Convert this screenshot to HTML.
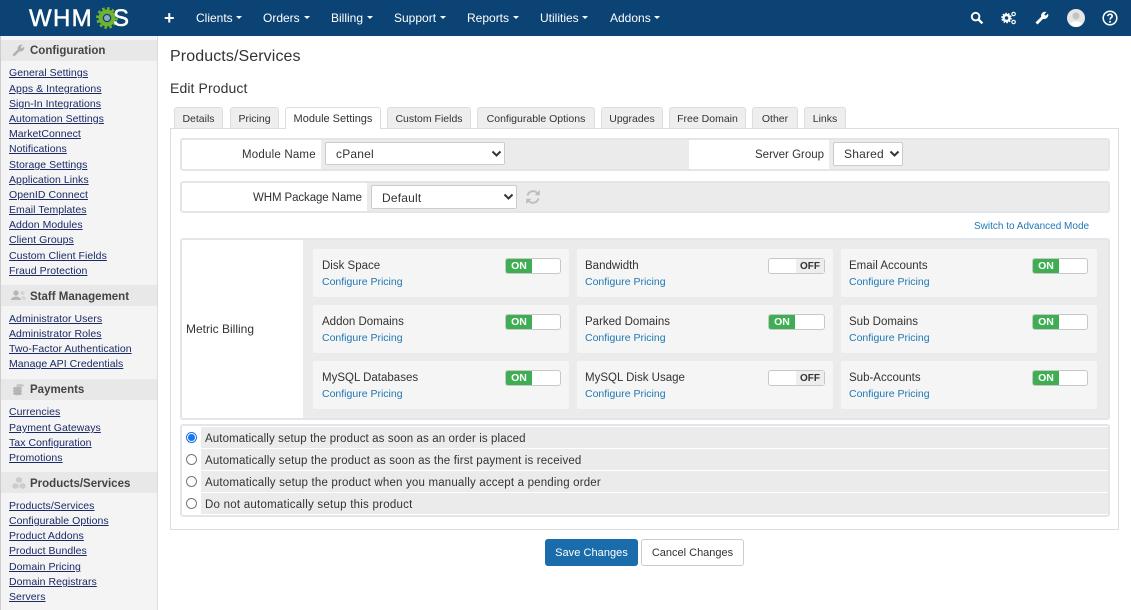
<!DOCTYPE html>
<html><head><meta charset="utf-8"><style>
html,body{margin:0;padding:0}
body{width:1131px;height:610px;overflow:hidden;position:relative;background:#fff;font-family:"Liberation Sans",sans-serif;font-size:11.5px;color:#333}
.a,.t,a,svg{position:absolute}
.t,a{white-space:nowrap;line-height:16px}
a{color:#1a2a66;text-decoration:underline;left:9px;font-size:10.5px;letter-spacing:.05px}
.n{color:#fff;font-size:12px;top:10px}
.c{position:absolute;top:16px;width:0;height:0;border:3.5px solid transparent;border-top-color:#fff;border-bottom:0}
.h{position:absolute;left:1px;width:156px;height:21px;background:#e8e8e8}
.ht{left:30px;font-weight:bold;font-size:11.5px;color:#444}
.tab{position:absolute;top:107px;height:20px;background:#eee;border:1px solid #ddd;border-bottom:0;border-radius:3px 3px 0 0;text-align:center;line-height:23px;font-size:10.5px;box-sizing:content-box}
.fs{position:absolute;left:180px;width:926px;border:2px solid #e2e6ea;border-radius:3px}
.g{position:absolute;background:#ebebeb}
.sel{position:absolute;background:#fff;border:1px solid #ccc;border-radius:2px;box-sizing:border-box;font-size:12px;line-height:22px;letter-spacing:.2px}
.card{position:absolute;width:256px;height:48px;background:#f5f5f5;border-radius:2px}
.ct{left:9px;top:9px;font-size:11.5px}
.cl{left:9px;top:25px;font-size:10.5px;color:#1f78b4;position:absolute;text-decoration:none;line-height:16px}
.sw{position:absolute;top:9px;left:192px;width:56px;height:16px;box-sizing:border-box;border:1px solid #c8c8c8;border-radius:3px;background:#fff}
.on{position:absolute;left:0;top:0;width:26px;height:14px;background:#3fae53;color:#fff;font-size:10.5px;font-weight:bold;line-height:14px;text-align:center;border-radius:2px 0 0 2px}
.off{position:absolute;right:0;top:0;width:28px;height:14px;background:#eee;color:#333;font-size:10px;font-weight:bold;line-height:15px;text-align:center}
.r{position:absolute;left:186px;width:9px;height:9px;border:1px solid #777;border-radius:50%;background:#fff}
.rt{left:205px;font-size:11.5px}
</style></head><body>
<div class="a" style="left:0;top:0;width:1131px;height:36px;background:#0b4474"></div>
<div class="t" style="left:29px;top:6px;font-size:24px;line-height:26px;color:#fff;letter-spacing:1.3px;-webkit-text-stroke:.5px #fff">WHM</div>
<svg style="left:95px;top:6px" width="24" height="24" viewBox="0 0 24 24"><circle cx="12" cy="12" r="9.6" fill="none" stroke="#6fb32f" stroke-width="2.6" stroke-dasharray="2.6 2.4"/><circle cx="12" cy="12" r="6.4" fill="none" stroke="#6fb32f" stroke-width="4.2"/><circle cx="12" cy="12" r="3" fill="#8fa8bd"/></svg>
<div class="t" style="left:113px;top:6px;font-size:24px;line-height:26px;color:#fff;-webkit-text-stroke:.5px #fff">S</div>
<div class="t" style="left:164px;top:8px;color:#fff;font-size:18px;line-height:20px;font-weight:bold">+</div>
<div class="t n" style="left:196px">Clients</div><i class="c" style="left:236px"></i>
<div class="t n" style="left:263px">Orders</div><i class="c" style="left:304px"></i>
<div class="t n" style="left:331px">Billing</div><i class="c" style="left:367px"></i>
<div class="t n" style="left:394px">Support</div><i class="c" style="left:440px"></i>
<div class="t n" style="left:467px">Reports</div><i class="c" style="left:513px"></i>
<div class="t n" style="left:540px">Utilities</div><i class="c" style="left:582px"></i>
<div class="t n" style="left:610px">Addons</div><i class="c" style="left:654px"></i>
<svg style="left:970px;top:11px" width="14" height="14" viewBox="0 0 14 14"><circle cx="5.6" cy="5.6" r="3.8" fill="none" stroke="#fff" stroke-width="1.9"/><path d="M8.5 8.5L12.4 12.4" stroke="#fff" stroke-width="2.3"/></svg>
<svg style="left:1001px;top:11px" width="16" height="14" viewBox="0 0 16 14"><circle cx="5.5" cy="7" r="3" fill="none" stroke="#fff" stroke-width="2.4"/><circle cx="5.5" cy="7" r="4.6" fill="none" stroke="#fff" stroke-width="1.4" stroke-dasharray="1.6 1.3"/><circle cx="12.6" cy="3" r="1.7" fill="none" stroke="#fff" stroke-width="1.2"/><circle cx="12.6" cy="11" r="1.7" fill="none" stroke="#fff" stroke-width="1.2"/></svg>
<svg style="left:1035px;top:11px" width="14" height="14" viewBox="0 0 14 14"><path d="M1.5 12.5L7.5 6.5" stroke="#fff" stroke-width="2.8"/><path d="M6.3 6A4 4 0 0 1 11.5 1L9.2 3.2 10.8 4.8 13 2.6A4 4 0 0 1 8 7.8Z" fill="#fff"/></svg>
<svg style="left:1067px;top:9px" width="18" height="18" viewBox="0 0 18 18"><circle cx="9" cy="9" r="9" fill="#e6e6e6"/><circle cx="9" cy="7" r="3.6" fill="#c4c4c4"/><path d="M2.6 15.4C4 11.4 14 11.4 15.4 15.4A9 9 0 0 1 2.6 15.4Z" fill="#fff"/></svg>
<svg style="left:1102px;top:10px" width="16" height="16" viewBox="0 0 16 16"><circle cx="8" cy="8" r="6.8" fill="none" stroke="#fff" stroke-width="1.5"/><path d="M5.8 6.2C5.9 3.6 10.2 3.6 10.2 6.1 10.2 7.7 8 7.7 8 9.6" fill="none" stroke="#fff" stroke-width="1.6"/><circle cx="8" cy="11.7" r="1" fill="#fff"/></svg>

<div class="a" style="left:0;top:36px;width:157px;height:574px;background:#f4f4f4;border-right:1px solid #ddd"></div>
<div class="a" style="left:0;top:36px;width:1px;height:574px;background:#ccc"></div>

<div class="h" style="top:40px"></div>
<svg style="left:12px;top:44px" width="13" height="13" viewBox="0 0 14 14"><path d="M1.5 12.5L7.5 6.5" stroke="#b0b0b0" stroke-width="2.8"/><path d="M6.3 6A4 4 0 0 1 11.5 1L9.2 3.2 10.8 4.8 13 2.6A4 4 0 0 1 8 7.8Z" fill="#b0b0b0"/></svg>
<div class="t ht" style="top:43px">Configuration</div>
<a style="top:65px">General Settings</a><a style="top:81px">Apps &amp; Integrations</a><a style="top:96px">Sign-In Integrations</a><a style="top:111px">Automation Settings</a><a style="top:126px">MarketConnect</a><a style="top:141px">Notifications</a><a style="top:157px">Storage Settings</a><a style="top:172px">Application Links</a><a style="top:187px">OpenID Connect</a><a style="top:202px">Email Templates</a><a style="top:217px">Addon Modules</a><a style="top:232px">Client Groups</a><a style="top:248px">Custom Client Fields</a><a style="top:263px">Fraud Protection</a>

<div class="h" style="top:285px"></div>
<svg style="left:11px;top:290px" width="15" height="11" viewBox="0 0 15 11"><circle cx="5" cy="3" r="2.6" fill="#b5b5b5"/><path d="M0 10C0 5.5 10 5.5 10 10Z" fill="#b5b5b5"/><circle cx="11.5" cy="3" r="2" fill="#d4d4d4"/><path d="M10.5 6.4C12.5 5.8 15 7 15 9.5H11Z" fill="#d4d4d4"/></svg>
<div class="t ht" style="top:289px">Staff Management</div>
<a style="top:311px">Administrator Users</a><a style="top:326px">Administrator Roles</a><a style="top:341px">Two-Factor Authentication</a><a style="top:356px">Manage API Credentials</a>

<div class="h" style="top:379px"></div>
<svg style="left:12px;top:383px" width="13" height="13" viewBox="0 0 13 13"><ellipse cx="8" cy="2.5" rx="4" ry="1.6" fill="#c8c8c8"/><ellipse cx="5.5" cy="5.5" rx="4.6" ry="1.7" fill="#b5b5b5"/><ellipse cx="5.5" cy="8" rx="4.6" ry="1.7" fill="#b5b5b5"/><ellipse cx="5.5" cy="10.5" rx="4.6" ry="1.7" fill="#b5b5b5"/></svg>
<div class="t ht" style="top:382px">Payments</div>
<a style="top:404px">Currencies</a><a style="top:420px">Payment Gateways</a><a style="top:435px">Tax Configuration</a><a style="top:450px">Promotions</a>

<div class="h" style="top:472px"></div>
<svg style="left:12px;top:477px" width="14" height="12" viewBox="0 0 14 12"><path d="M7 0L10 1.5V4.5L7 6 4 4.5V1.5Z" fill="#ccc"/><path d="M3.5 6L6.5 7.5V10.5L3.5 12 .5 10.5V7.5Z" fill="#ccc"/><path d="M10.5 6L13.5 7.5V10.5L10.5 12 7.5 10.5V7.5Z" fill="#ccc"/></svg>
<div class="t ht" style="top:476px">Products/Services</div>
<a style="top:498px">Products/Services</a><a style="top:513px">Configurable Options</a><a style="top:528px">Product Addons</a><a style="top:543px">Product Bundles</a><a style="top:559px">Domain Pricing</a><a style="top:574px">Domain Registrars</a><a style="top:589px">Servers</a>

<div class="t" style="left:170px;top:47px;font-size:16px;line-height:20px;letter-spacing:.1px">Products/Services</div>
<div class="t" style="left:170px;top:79px;font-size:14px;line-height:18px;letter-spacing:.1px">Edit Product</div>

<div class="a" style="left:170px;top:128px;width:947px;height:400px;border:1px solid #ddd"></div>
<div class="tab" style="left:174px;width:47px">Details</div>
<div class="tab" style="left:230px;width:47px">Pricing</div>
<div class="tab" style="left:285px;width:94px;height:21px;background:#fff;z-index:2;font-size:11px">Module Settings</div>
<div class="tab" style="left:387px;width:82px">Custom Fields</div>
<div class="tab" style="left:477px;width:116px">Configurable Options</div>
<div class="tab" style="left:601px;width:60px">Upgrades</div>
<div class="tab" style="left:669px;width:75px">Free Domain</div>
<div class="tab" style="left:752px;width:44px">Other</div>
<div class="tab" style="left:804px;width:40px">Links</div>

<div class="fs" style="top:138px;height:29px"></div>
<div class="g" style="left:321px;top:140px;width:368px;height:29px"></div>
<div class="g" style="left:829px;top:140px;width:279px;height:29px"></div>
<div class="t" style="left:242px;top:147px;font-size:11.5px;letter-spacing:.2px">Module Name</div>
<div class="sel" style="left:325px;top:142px;width:180px;height:23px;padding-left:10px">cPanel</div>
<svg style="left:491px;top:150px" width="11" height="8" viewBox="0 0 11 8"><path d="M1.5 1.5L5.5 5.5 9.5 1.5" fill="none" stroke="#333" stroke-width="2"/></svg>
<div class="t" style="left:755px;top:147px;font-size:11.5px">Server Group</div>
<div class="sel" style="left:833px;top:142px;width:70px;height:24px;padding-left:10px">Shared</div>
<svg style="left:889px;top:150px" width="11" height="8" viewBox="0 0 11 8"><path d="M1.5 1.5L5.5 5.5 9.5 1.5" fill="none" stroke="#333" stroke-width="2"/></svg>

<div class="fs" style="top:181px;height:28px"></div>
<div class="g" style="left:367px;top:183px;width:741px;height:28px"></div>
<div class="t" style="left:253px;top:190px;font-size:11.5px;letter-spacing:-.1px">WHM Package Name</div>
<div class="sel" style="left:371px;top:185px;width:146px;height:24px;padding-left:10px;line-height:24px">Default</div>
<svg style="left:503px;top:193px" width="11" height="8" viewBox="0 0 11 8"><path d="M1.5 1.5L5.5 5.5 9.5 1.5" fill="none" stroke="#333" stroke-width="2"/></svg>
<svg style="left:525px;top:189px" width="16" height="16" viewBox="0 0 16 16"><path d="M2.5 6.5A5.8 5.8 0 0 1 12.5 4.2M13.5 9.5A5.8 5.8 0 0 1 3.5 11.8" fill="none" stroke="#bdbdbd" stroke-width="1.9"/><path d="M14.8 1V6.2H9.6ZM1.2 15V9.8H6.4Z" fill="#bdbdbd"/></svg>

<div class="t" style="left:974px;top:219px;font-size:10px;color:#1f78b4">Switch to Advanced Mode</div>

<div class="fs" style="top:238px;height:178px"></div>
<div class="g" style="left:303px;top:240px;width:805px;height:178px"></div>
<div class="t" style="left:186px;top:321px;font-size:12px">Metric Billing</div>

<div class="card" style="left:313px;top:249px"><div class="t ct">Disk Space</div><div class="cl">Configure Pricing</div><div class="sw"><div class="on">ON</div></div></div>
<div class="card" style="left:577px;top:249px"><div class="t ct" style="left:8px">Bandwidth</div><div class="cl" style="left:8px">Configure Pricing</div><div class="sw" style="width:57px;left:191px"><div class="off">OFF</div></div></div>
<div class="card" style="left:841px;top:249px"><div class="t ct" style="left:8px">Email Accounts</div><div class="cl" style="left:8px">Configure Pricing</div><div class="sw" style="left:191px"><div class="on">ON</div></div></div>
<div class="card" style="left:313px;top:305px"><div class="t ct">Addon Domains</div><div class="cl">Configure Pricing</div><div class="sw"><div class="on">ON</div></div></div>
<div class="card" style="left:577px;top:305px"><div class="t ct" style="left:8px">Parked Domains</div><div class="cl" style="left:8px">Configure Pricing</div><div class="sw" style="width:57px;left:191px"><div class="on">ON</div></div></div>
<div class="card" style="left:841px;top:305px"><div class="t ct" style="left:8px">Sub Domains</div><div class="cl" style="left:8px">Configure Pricing</div><div class="sw" style="left:191px"><div class="on">ON</div></div></div>
<div class="card" style="left:313px;top:361px"><div class="t ct">MySQL Databases</div><div class="cl">Configure Pricing</div><div class="sw"><div class="on">ON</div></div></div>
<div class="card" style="left:577px;top:361px"><div class="t ct" style="left:8px">MySQL Disk Usage</div><div class="cl" style="left:8px">Configure Pricing</div><div class="sw" style="width:57px;left:191px"><div class="off">OFF</div></div></div>
<div class="card" style="left:841px;top:361px"><div class="t ct" style="left:8px">Sub-Accounts</div><div class="cl" style="left:8px">Configure Pricing</div><div class="sw" style="left:191px"><div class="on">ON</div></div></div>

<div class="fs" style="top:424px;height:89px"></div>
<div class="g" style="left:201px;top:427px;width:907px;height:21px"></div>
<div class="g" style="left:201px;top:449px;width:907px;height:21px"></div>
<div class="g" style="left:201px;top:471px;width:907px;height:21px"></div>
<div class="g" style="left:201px;top:493px;width:907px;height:21px"></div>
<div class="r" style="top:432px;border-color:#1a73e8"></div><div class="a" style="left:188px;top:434px;width:7px;height:7px;border-radius:50%;background:#1a73e8"></div>
<div class="r" style="top:454px"></div><div class="r" style="top:476px"></div><div class="r" style="top:498px"></div>
<div class="t rt" style="top:431px;letter-spacing:.11px">Automatically setup the product as soon as an order is placed</div>
<div class="t rt" style="top:453px;letter-spacing:.15px">Automatically setup the product as soon as the first payment is received</div>
<div class="t rt" style="top:475px;letter-spacing:.18px">Automatically setup the product when you manually accept a pending order</div>
<div class="t rt" style="top:497px;letter-spacing:.24px">Do not automatically setup this product</div>

<div class="a" style="left:545px;top:539px;width:93px;height:27px;background:#1a6cab;border-radius:3px;color:#fff;text-align:center;line-height:28px;font-size:11px;letter-spacing:.05px">Save Changes</div>
<div class="a" style="left:641px;top:539px;width:101px;height:25px;background:#fff;border:1px solid #ccc;border-radius:3px;text-align:center;line-height:27px;font-size:11px">Cancel Changes</div>
</body></html>
